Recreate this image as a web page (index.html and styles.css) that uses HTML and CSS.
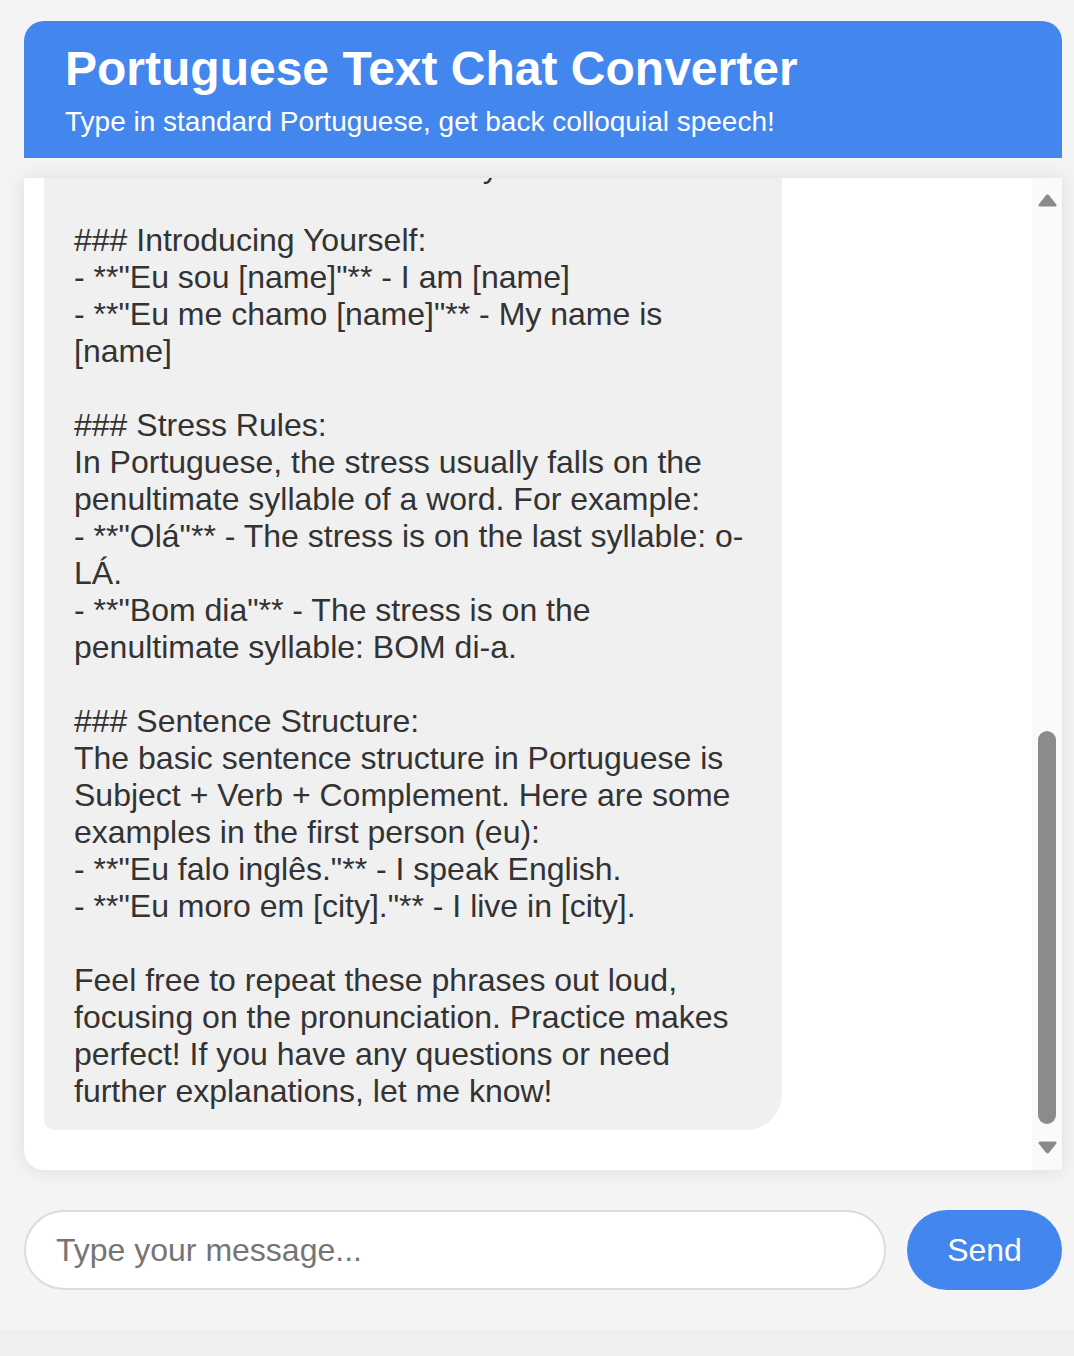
FILE: index.html
```html
<!DOCTYPE html>
<html lang="en">
<head>
<meta charset="utf-8">
<title>Portuguese Text Chat Converter</title>
<link rel="stylesheet" href="styles.css">
</head>
<body>
<div class="app">
  <header class="header">
    <h1 class="title">Portuguese Text Chat Converter</h1>
    <p class="subtitle">Type in standard Portuguese, get back colloquial speech!</p>
  </header>
  <section class="chat">
    <div class="messages">
      <div class="bubble bot">Here are some basic phrases to practice:

### Greetings:
- **"Olá"** - Hello
- **"Bom dia"** - Good morning
- **"Tchau! Adeus"** - Goodbye

### Introducing Yourself:
- **"Eu sou [name]"** - I am [name]
- **"Eu me chamo [name]"** - My name is [name]

### Stress Rules:
In Portuguese, the stress usually falls on the penultimate syllable of a word. For example:
- **"Olá"** - The stress is on the last syllable: o-LÁ.
- **"Bom dia"** - The stress is on the penultimate syllable: BOM di-a.

### Sentence Structure:
The basic sentence structure in Portuguese is Subject + Verb + Complement. Here are some examples in the first person (eu):
- **"Eu falo inglês."** - I speak English.
- **"Eu moro em [city]."** - I live in [city].

Feel free to repeat these phrases out loud, focusing on the pronunciation. Practice makes perfect! If you have any questions or need further explanations, let me know!</div>
    </div>
    <div class="scrollbar" aria-hidden="true">
      <svg class="arrow" width="19" height="13" viewBox="0 0 19 13"><path d="M8 1.2 Q9.5 -0.4 11 1.2 L18.2 10.2 Q19.2 12.6 17 12.6 L2 12.6 Q-0.2 12.6 0.8 10.2 Z" fill="#8a8a8a"/></svg>
      <div class="track"><div class="thumb"></div></div>
      <svg class="arrow" width="19" height="13" viewBox="0 0 19 13"><path d="M8 11.8 Q9.5 13.4 11 11.8 L18.2 2.8 Q19.2 0.4 17 0.4 L2 0.4 Q-0.2 0.4 0.8 2.8 Z" fill="#8a8a8a"/></svg>
    </div>
  </section>
  <form class="composer">
    <input class="field" type="text" placeholder="Type your message...">
    <button class="send" type="button">Send</button>
  </form>
</div>
</body>
</html>
```

FILE: styles.css
```css
* {
  box-sizing: border-box;
}

html, body {
  margin: 0;
  padding: 0;
}

body {
  background: #efefef;
  font-family: "Liberation Sans", Arial, sans-serif;
  color: #333;
}

.app {
  height: 1330px;
  background: #f4f4f4;
  padding: 21px 12px 0 24px;
  display: flex;
  flex-direction: column;
  box-shadow: 0 2px 18px rgba(0, 0, 0, 0.08);
}

.header {
  background: #4286ee;
  color: #fff;
  border-radius: 20px 20px 0 0;
  padding: 20px 41px 0;
  height: 137px;
}

.title {
  margin: 0 0 10px;
  font-size: 48px;
  font-weight: bold;
  line-height: 55px;
}

.subtitle {
  margin: 0;
  font-size: 28px;
  line-height: 32px;
}

.chat {
  margin-top: 20px;
  height: 992px;
  background: #fff;
  border-radius: 0 0 0 20px;
  box-shadow: 0 0 20px rgba(0, 0, 0, 0.1);
  display: flex;
  overflow: hidden;
}

.messages {
  flex: 1;
  display: flex;
  flex-direction: column;
  justify-content: flex-end;
  align-items: flex-start;
  overflow: hidden;
  padding: 0 20px 40px;
}

.bubble {
  max-width: 70%;
  box-sizing: content-box;
  padding: 20px 30px 20px;
  font-size: 32px;
  line-height: 37px;
  white-space: pre-wrap;
  flex-shrink: 0;
}

.bot {
  background: #f0f0f0;
  color: #333;
  border-radius: 36px 36px 36px 10px;
}

.scrollbar {
  width: 30px;
  flex-shrink: 0;
  background: #fafafa;
  display: flex;
  flex-direction: column;
  align-items: center;
  padding: 16px 0;
}

.arrow {
  display: block;
  flex-shrink: 0;
}

.track {
  flex: 1;
  width: 100%;
  display: flex;
  flex-direction: column;
  justify-content: flex-end;
  align-items: center;
  padding-bottom: 17px;
}

.thumb {
  width: 18px;
  height: 393px;
  border-radius: 9px;
  background: #8b8b8b;
}

.composer {
  margin: 40px 0 0;
  display: flex;
  gap: 21px;
  height: 80px;
}

.field {
  flex: 1;
  height: 80px;
  border: 2px solid #dcdcdc;
  border-radius: 40px;
  padding: 0 30px;
  font-family: "Liberation Sans", Arial, sans-serif;
  font-size: 32px;
  color: #333;
  background: #fff;
  outline: none;
}

.field::placeholder {
  color: #757575;
}

.send {
  width: 155px;
  height: 80px;
  border: none;
  border-radius: 40px;
  background: #4286ee;
  color: #fff;
  font-family: "Liberation Sans", Arial, sans-serif;
  font-size: 32px;
  cursor: pointer;
}
```
